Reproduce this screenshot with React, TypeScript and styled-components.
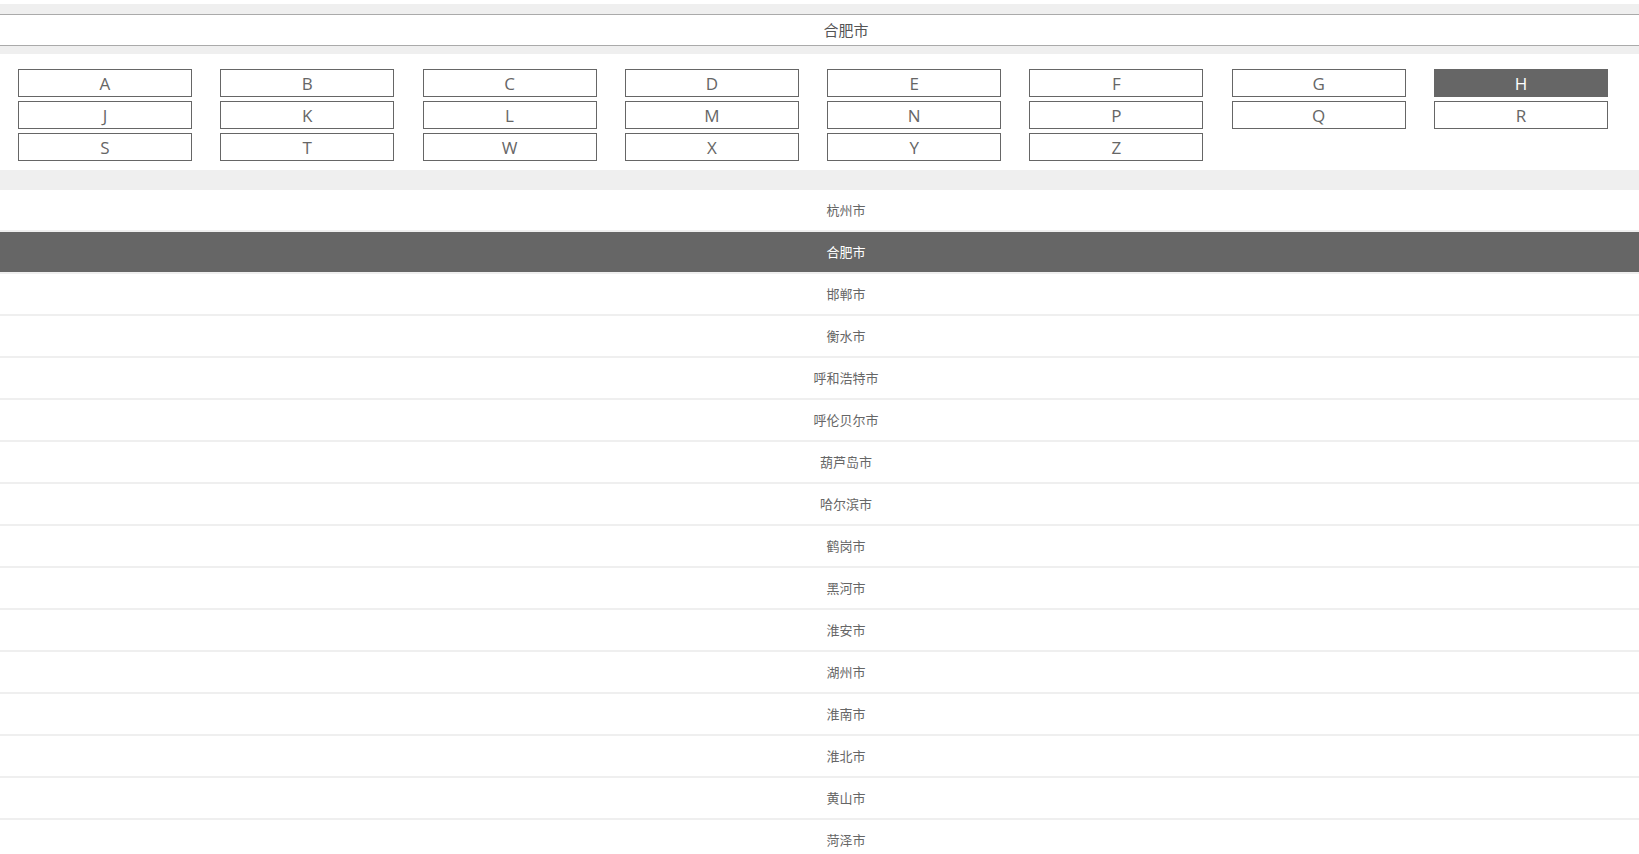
import { useState } from 'react';
import styled, { createGlobalStyle } from 'styled-components';

const GlobalStyle = createGlobalStyle`
  html, body {
    margin: 0;
    padding: 0;
    background: #fff;
    font-family: 'Open Sans', 'Noto Sans CJK SC', sans-serif;
    color: #666;
  }
  * {
    box-sizing: border-box;
  }
`;

const Page = styled.div`
  padding-top: 4px;
  background: #fff;
`;

const Gap = styled.div<{ $h: number }>`
  height: ${(p) => p.$h}px;
  background: #efefef;
`;

const Current = styled.div`
  height: 32px;
  border-top: 1px solid #aaa;
  border-bottom: 1px solid #aaa;
  display: flex;
  align-items: center;
  justify-content: center;
  padding: 0 0 2px 53px;
  font-size: 15px;
  color: #555;
  background: #fff;
`;

const Letters = styled.ul`
  list-style: none;
  margin: 0;
  padding: 15px 31px 9px 18px;
  display: grid;
  grid-template-columns: repeat(8, 1fr);
  column-gap: 28.4px;
  row-gap: 4px;
  background: #fff;
`;

const Letter = styled.li<{ $active: boolean }>`
  height: 28px;
  border: 1px solid #666;
  display: flex;
  align-items: center;
  justify-content: center;
  font-size: 17px;
  font-weight: 400;
  cursor: pointer;
  color: ${(p) => (p.$active ? '#fff' : '#666')};
  background: ${(p) => (p.$active ? '#666' : '#fff')};
`;

const Cities = styled.ul`
  list-style: none;
  margin: 0;
  padding: 0;
`;

const City = styled.li<{ $active: boolean }>`
  height: 42px;
  border-bottom: 2px solid #efefef;
  display: flex;
  align-items: center;
  justify-content: center;
  padding: 0 0 2px 53px;
  font-size: 13px;
  cursor: pointer;
  color: ${(p) => (p.$active ? '#fff' : '#666')};
  background: ${(p) => (p.$active ? '#666' : '#fff')};
`;

const letters = 'ABCDEFGHJKLMNPQRSTWXYZ'.split('');

const cities = [
  '杭州市',
  '合肥市',
  '邯郸市',
  '衡水市',
  '呼和浩特市',
  '呼伦贝尔市',
  '葫芦岛市',
  '哈尔滨市',
  '鹤岗市',
  '黑河市',
  '淮安市',
  '湖州市',
  '淮南市',
  '淮北市',
  '黄山市',
  '菏泽市',
  '鹤壁市',
];

const App = () => {
  const [letter, setLetter] = useState('H');
  const [city, setCity] = useState('合肥市');

  return (
    <Page>
      <GlobalStyle />
      <Gap $h={10} />
      <Current>{city}</Current>
      <Gap $h={8} />
      <Letters>
        {letters.map((l) => (
          <Letter key={l} $active={l === letter} onClick={() => setLetter(l)}>
            {l}
          </Letter>
        ))}
      </Letters>
      <Gap $h={20} />
      <Cities>
        {cities.map((c) => (
          <City key={c} $active={c === city} onClick={() => setCity(c)}>
            {c}
          </City>
        ))}
      </Cities>
    </Page>
  );
};

export default App;
